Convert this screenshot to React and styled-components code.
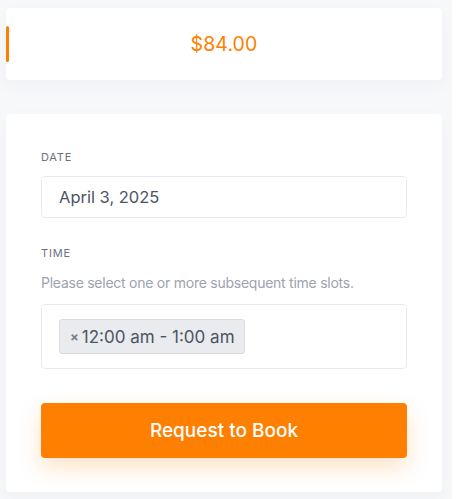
import styled, { createGlobalStyle } from "styled-components";

const GlobalStyle = createGlobalStyle`
  html, body {
    margin: 0;
    padding: 0;
    background: #ffffff;
    font-family: "Inter", "Liberation Sans", sans-serif;
  }
`;

const Page = styled.div`
  width: 452px;
  min-height: 499px;
  box-sizing: border-box;
  background: #f7f8fa;
  padding: 8px 10px 7px 6px;
  display: flex;
  flex-direction: column;
  gap: 34px;
`;

const Card = styled.div`
  background: #ffffff;
  border-radius: 4px;
  box-shadow: 0 6px 18px rgba(40, 50, 80, 0.04);
`;

const PriceCard = styled(Card)`
  height: 72px;
  display: flex;
  align-items: center;
  justify-content: center;
  position: relative;
`;

const Accent = styled.span`
  position: absolute;
  left: 0;
  top: 18px;
  width: 3px;
  height: 36px;
  border-radius: 2px;
  background: #ff7f00;
`;

const Price = styled.div`
  color: #ff7f00;
  font-size: 19.5px;
  font-weight: 400;
  letter-spacing: 0.1px;
`;

const FormCard = styled(Card)`
  padding: 36px 35px 34px 35px;
  display: flex;
  flex-direction: column;
`;

const Label = styled.div`
  font-size: 11px;
  letter-spacing: 0.8px;
  text-transform: uppercase;
  color: #6b7280;
  line-height: 14px;
  margin-bottom: ${(p) => p.$gap || 12}px;
`;

const Field = styled.div`
  box-sizing: border-box;
  border: 1px solid #e8eaee;
  border-radius: 4px;
  background: #ffffff;
  display: flex;
  align-items: center;
`;

const DateField = styled(Field)`
  height: 42px;
  padding: 0 17px;
  font-size: 16.5px;
  color: #4b5563;
  margin-bottom: 28px;
`;

const Hint = styled.div`
  font-size: 14px;
  color: #9ca3af;
  margin-bottom: 13px;
  letter-spacing: -0.25px;
`;

const SlotField = styled(Field)`
  height: 65px;
  padding: 0 17px;
  margin-bottom: 34px;
`;

const Chip = styled.div`
  display: flex;
  align-items: center;
  gap: 3px;
  height: 35px;
  box-sizing: border-box;
  padding: 0 9px 0 10px;
  background: #e9ebef;
  border: 1px solid #d9dce1;
  border-radius: 3px;
  font-size: 17px;
  color: #4b5563;
`;

const Remove = styled.span`
  font-size: 13px;
  color: #7b818b;
  font-weight: 700;
`;

const BookButton = styled.button`
  height: 55px;
  border: none;
  border-radius: 4px;
  background: #ff7f00;
  color: #ffffff;
  font-family: inherit;
  font-size: 19px;
  font-weight: 500;
  box-shadow: 0 10px 22px rgba(255, 127, 0, 0.22);
  cursor: pointer;
`;

export default function App() {
  return (
    <>
      <GlobalStyle />
      <Page>
        <PriceCard>
          <Accent />
          <Price>$84.00</Price>
        </PriceCard>
        <FormCard>
          <Label>Date</Label>
          <DateField>April 3, 2025</DateField>
          <Label $gap={14}>Time</Label>
          <Hint>Please select one or more subsequent time slots.</Hint>
          <SlotField>
            <Chip>
              <Remove>×</Remove>
              12:00 am - 1:00 am
            </Chip>
          </SlotField>
          <BookButton>Request to Book</BookButton>
        </FormCard>
      </Page>
    </>
  );
}
